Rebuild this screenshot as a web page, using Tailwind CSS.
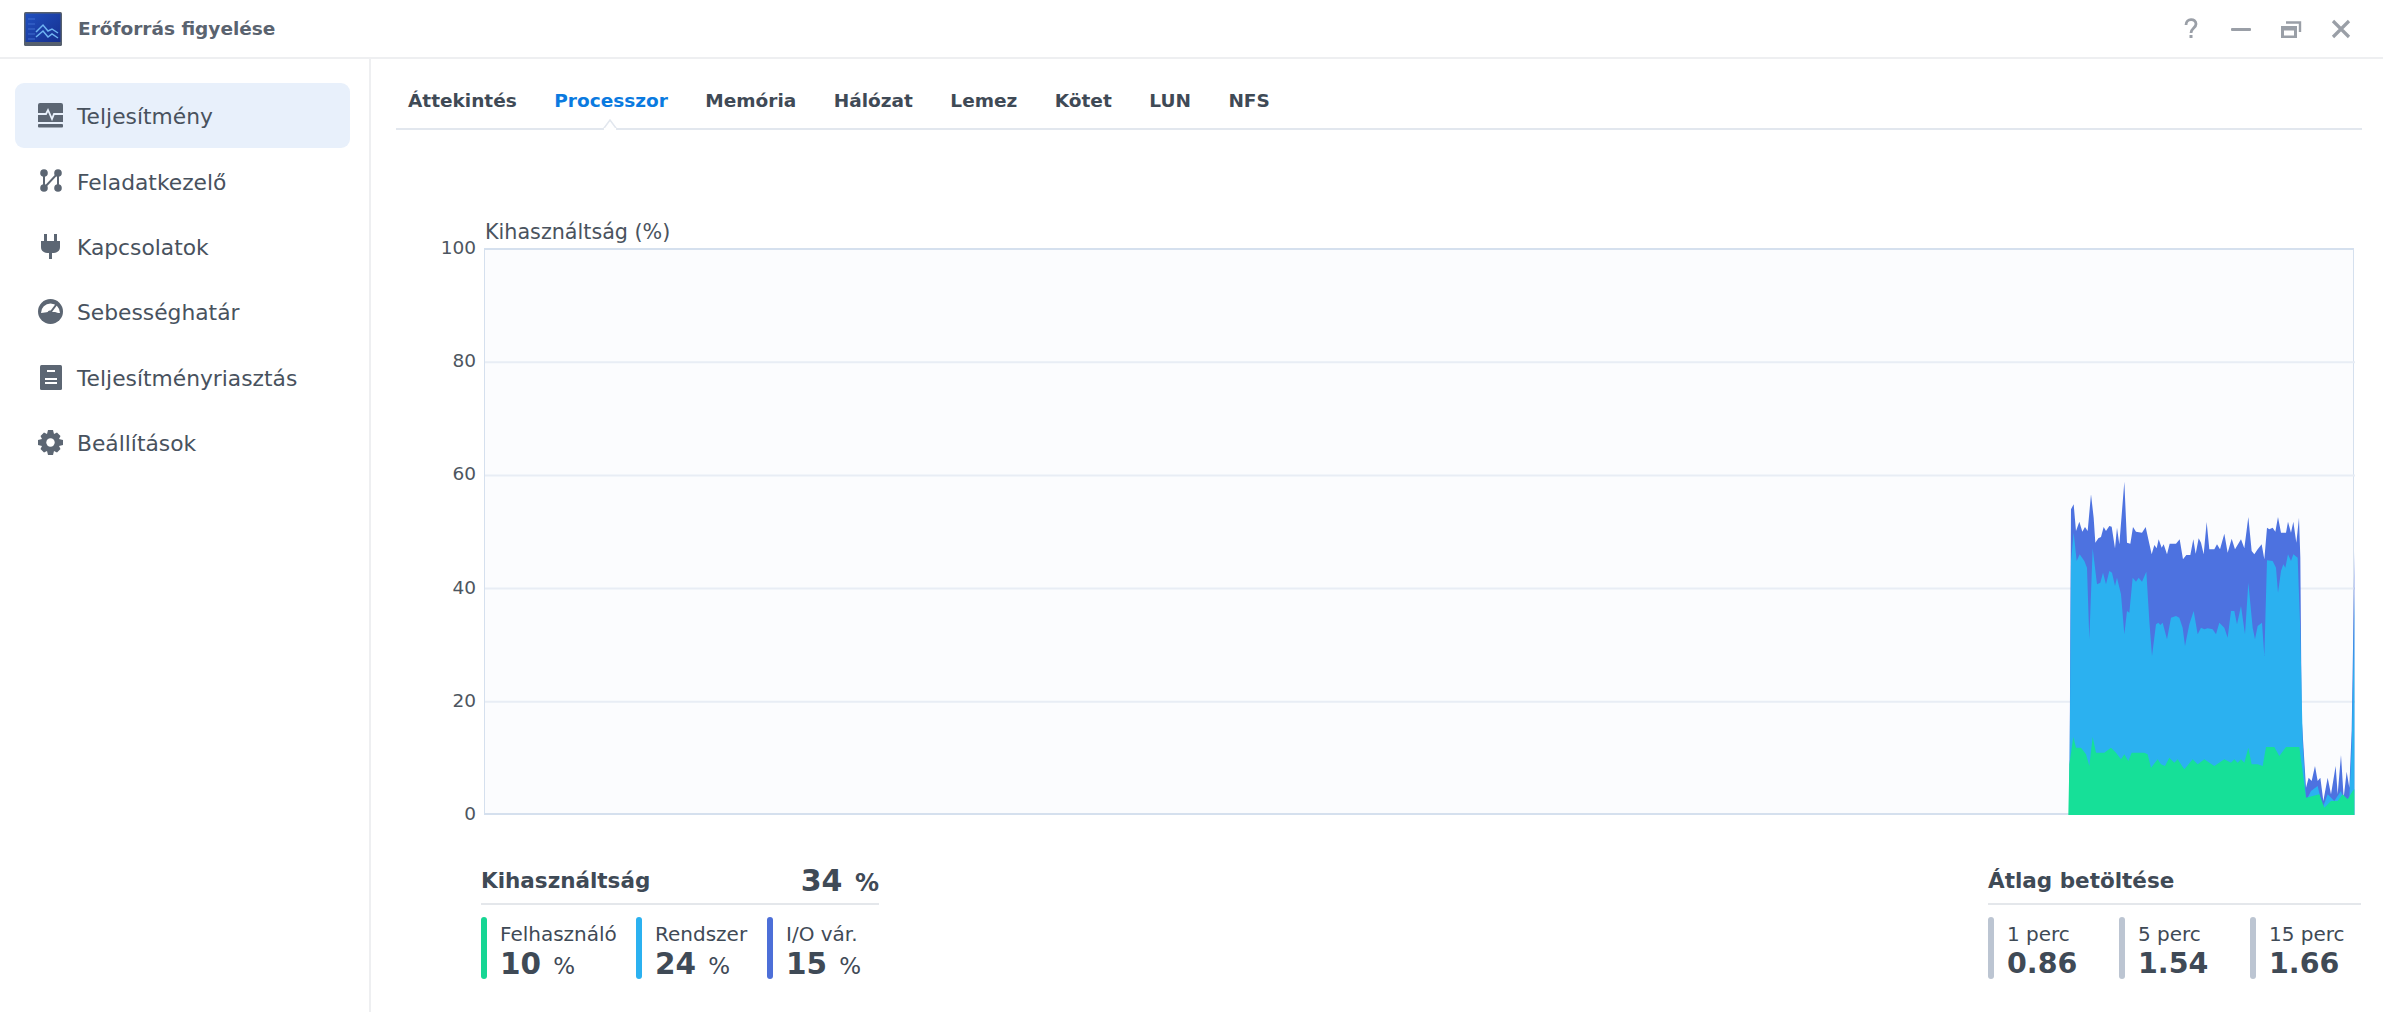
<!DOCTYPE html>
<html lang="hu">
<head>
    <meta charset="UTF-8">
    <title>Erőforrás figyelése</title>
    <script src="https://cdn.jsdelivr.net/npm/@tailwindcss/browser@4"></script>
</head>
<body class="bg-white font-['DejaVu_Sans',sans-serif] text-[#3f4a56] w-[2383px] h-[1012px] overflow-hidden">

    <!-- title bar -->
    <header class="h-[59px] border-b-2 border-[#eeeff1] flex items-center pl-[24px] pr-[30px]">
        <svg width="38" height="34" viewBox="0 0 38 34" class="shrink-0">
            <defs><linearGradient id="screen" x1="0" y1="0" x2="1" y2="1"><stop offset="0" stop-color="#2050c0"/><stop offset="1" stop-color="#162f8e"/></linearGradient></defs>
            <rect width="38" height="34" rx="1.5" fill="#56606e"/>
            <rect x="1.5" y="1.5" width="35" height="28.500" fill="url(#screen)"/>
            <path d="M4 7h7M4 12h7M4 17h7M4 22h7M4 27h7" stroke="#4a79d8" stroke-width="0.800"/>
            <path d="M12 20l7-7 5 6 4-2 6 4" fill="none" stroke="#6fb4f2" stroke-width="1.500"/>
            <path d="M12 25l7-6 5 6 4-3 6 4" fill="none" stroke="#6fb4f2" stroke-width="1.500"/>
        </svg>
        <span class="ml-[16px] text-[18.500px] font-bold text-[#5a636f]">Erőforrás figyelése</span>
        <div class="ml-auto flex items-center gap-[26px] text-[#9a9fa7]">
            <svg width="24" height="24" viewBox="0 0 24 24"><path d="M7 8c0-7 10-7 10-1 0 4-5 4-5 9" fill="none" stroke="currentColor" stroke-width="2.800"/><rect x="10.500" y="18" width="3" height="3" fill="currentColor"/></svg>
            <svg width="24" height="24" viewBox="0 0 24 24"><rect x="2" y="11" width="20" height="3" rx="1" fill="currentColor"/></svg>
            <svg width="24" height="24" viewBox="0 0 24 24"><path d="M7 5.500h14v9.500" fill="none" stroke="currentColor" stroke-width="2.400"/><path d="M2 9h16v12H2z" fill="currentColor"/><rect x="5" y="13.500" width="10" height="5" fill="#fff"/></svg>
            <svg width="24" height="24" viewBox="0 0 24 24"><path d="M4 4l16 16M20 4L4 20" stroke="currentColor" stroke-width="3.200"/></svg>
        </div>
    </header>

    <div class="flex h-[953px]">
        <!-- sidebar -->
        <aside class="w-[371px] shrink-0 border-r-2 border-[#eeeff1] pt-[24px] pl-[15px] pr-[19px] text-[21.800px] text-[#48525e]">
            <div class="h-[65px] mb-[0.400px] rounded-[9px] bg-[#e8f0fb] flex items-center pl-[23px] gap-[14px]">
                <svg width="25" height="25" viewBox="0 0 25 25" class="shrink-0"><path d="M2 0h21a2 2 0 0 1 2 2v17H0V2a2 2 0 0 1 2-2z" fill="#5c6673"/><path d="M0 11h8l2-4 4 9 2-5h9" fill="none" stroke="#e8f0fb" stroke-width="1.800"/><rect y="21" width="25" height="3.500" rx="1" fill="#5c6673"/></svg>
                <span class="pt-[4px]">Teljesítmény</span>
            </div>
            <div class="h-[65px] mb-[0.400px] flex items-center pl-[23px] gap-[14px]">
                <svg width="25" height="25" viewBox="0 0 25 25" class="shrink-0"><g fill="#5c6673"><circle cx="6" cy="5" r="3.800"/><circle cx="20" cy="5" r="3.800"/><circle cx="6" cy="20" r="3.800"/><circle cx="20" cy="20" r="3.800"/></g><path d="M6 5v15L20 5v15" fill="none" stroke="#5c6673" stroke-width="2"/></svg>
                <span class="pt-[4px]">Feladatkezelő</span>
            </div>
            <div class="h-[65px] mb-[0.400px] flex items-center pl-[23px] gap-[14px]">
                <svg width="25" height="25" viewBox="0 0 25 25" class="shrink-0"><path d="M6 0h3v7h7V0h3v7h3v6c0 4-3 6-8 6v6h-3v-6c-5 0-8-2-8-6V7h3z" fill="#5c6673"/></svg>
                <span class="pt-[4px]">Kapcsolatok</span>
            </div>
            <div class="h-[65px] mb-[0.400px] flex items-center pl-[23px] gap-[14px]">
                <svg width="25" height="25" viewBox="0 0 25 25" class="shrink-0"><circle cx="12.500" cy="12.500" r="12.500" fill="#5c6673"/><path d="M3 14a9.500 9.500 0 0 1 19 0c-2 0-4-.500-5-1h-7c-2 0-4 1-7 1z" fill="#fff"/><path d="M12 14l6-8" stroke="#5c6673" stroke-width="2"/><circle cx="12" cy="14" r="2.500" fill="#5c6673"/></svg>
                <span class="pt-[4px]">Sebességhatár</span>
            </div>
            <div class="h-[65px] mb-[0.400px] flex items-center pl-[23px] gap-[14px]">
                <svg width="25" height="25" viewBox="0 0 25 25" class="shrink-0"><rect x="2" width="22" height="25" rx="1.500" fill="#5c6673"/><path d="M9 6h8M7 14h12M7 18h12" stroke="#fff" stroke-width="1.800"/></svg>
                <span class="pt-[4px]">Teljesítményriasztás</span>
            </div>
            <div class="h-[65px] flex items-center pl-[23px] gap-[14px]">
                <svg width="25" height="25" viewBox="0 0 25 25" class="shrink-0"><path d="M10 0h5l1 4 3-1.500 3.500 3.500-1.500 3 4 1v5l-4 1 1.500 3-3.500 3.500-3-1.500-1 4h-5l-1-4-3 1.500L2.500 19l1.500-3-4-1v-5l4-1-1.500-3L6 2.500 9 4z" fill="#5c6673"/><circle cx="12.500" cy="12.500" r="4.200" fill="#fff"/></svg>
                <span class="pt-[4px]">Beállítások</span>
            </div>
        </aside>

        <!-- main -->
        <main class="flex-1 flex flex-col">
            <!-- tabs -->
            <nav class="relative ml-[25px] mr-[21px] h-[71px] border-b-2 border-[#e2e7ee] flex items-center pl-[12px] pt-[15px] gap-[37.500px] text-[18.500px] font-bold text-[#3f4a56]">
                <span>Áttekintés</span>
                <span class="text-[#0a7ae0]">Processzor</span>
                <span>Memória</span>
                <span>Hálózat</span>
                <span>Lemez</span>
                <span>Kötet</span>
                <span>LUN</span>
                <span>NFS</span>
                <svg width="22" height="11" viewBox="0 0 22 11" class="absolute left-[203px] bottom-[-2px]"><path d="M1 10.500h3L11 1l7 9.500h3" fill="#fff" stroke="#e2e7ee" stroke-width="1.500"/><rect x="5" y="9" width="12" height="2" fill="#fff"/></svg>
            </nav>

            <!-- chart -->
            <div class="pl-[113px] pt-[86px]">
                <div class="text-[20.700px] leading-[24px] text-[#4a535e] mt-[4px] mb-[4px] ml-[1px]">Kihasználtság (%)</div>
                <div class="flex ml-[-60px]">
                    <div class="w-[52px] mr-[8px] h-[590px] -my-[12px] flex flex-col justify-between text-right text-[18.500px] leading-[24px] text-[#4d5660]">
                        <span>100</span><span>80</span><span>60</span><span>40</span><span>20</span><span>0</span>
                    </div>
                    <div class="w-[1870px] h-[567px] bg-[#fbfcfe] border border-[#d5e0ee] border-t-2 border-b-2">
                        <svg width="1870" height="567" viewBox="484 248 1870 567" class="block -mt-[1px]">
                            <path d="M484 361.200H2354M484 474.400H2354M484 587.600H2354M484 700.800H2354" stroke="#e8edf5" stroke-width="2"/>
                            <g transform="translate(2040 460) scale(0.33333)">
                                <polygon fill="#4d72e0" points="85,1062 90,145 98,130 105,210 115,182 124,212 132,198 140,210 150,100 158,170 163,245 172,232 180,228 188,198 195,210 205,195 212,197 222,262 228,200 235,250 250,62 258,245 268,248 276,198 285,212 303,215 314,198 322,235 332,280 340,252 347,262 353,235 362,260 368,250 378,280 386,248 405,248 416,235 426,295 436,282 448,282 457,235 464,278 473,232 480,245 488,280 497,183 505,265 520,265 528,250 537,265 550,218 560,275 572,233 582,265 600,235 610,262 622,168 632,270 640,280 650,265 662,250 670,295 678,200 685,205 695,200 703,212 711,168 720,215 735,215 741,182 750,215 757,182 766,245 774,170 778,290 782,770 795,980 803,950 812,960 822,915 830,960 838,950 847,1020 860,950 870,1000 884,915 890,1000 900,882 908,1010 917,932 925,980 932,810 937,500 940,270 940,1062"/>
                                <polygon fill="#2bb1f0" points="85,1062 90,300 98,215 107,300 116,280 130,300 138,320 145,535 155,262 168,370 178,365 186,335 195,370 205,330 213,335 222,375 228,350 240,400 250,520 258,450 265,455 275,350 285,362 293,350 303,362 316,332 325,480 333,585 345,490 352,485 358,492 365,485 378,535 390,470 405,465 415,470 425,500 432,555 445,490 458,450 470,520 480,500 490,505 500,502 515,505 525,520 535,485 550,500 560,530 570,450 580,450 588,490 600,435 612,520 622,365 635,500 642,535 650,495 663,485 670,585 678,298 695,300 705,320 711,395 720,330 727,310 733,320 741,280 750,300 757,280 770,290 778,510 785,840 795,1020 810,990 830,975 845,1040 860,1000 880,1020 900,990 908,1020 925,1010 932,860 937,600 940,400 940,1062"/>
                                <polygon fill="#16e098" points="82,1062 85,910 97,828 105,860 120,860 135,880 145,915 155,828 165,875 190,875 210,860 225,875 240,895 250,880 262,900 272,875 310,875 320,880 330,920 350,895 360,910 372,915 385,890 400,905 410,895 430,925 455,895 470,910 490,895 520,915 550,895 570,905 580,895 590,905 600,895 610,905 622,860 632,910 650,910 665,915 675,858 700,858 715,885 735,858 775,858 782,910 795,1010 815,1005 835,1000 850,1040 870,1020 890,1020 905,1000 920,1015 935,990 940,985 940,1062"/>
                            </g>
                        </svg>
                    </div>
                </div>
            </div>

            <!-- stats -->
            <div class="flex justify-between pl-[110px] pr-[22px] mt-[44px]">
                <section class="w-[398px]">
                    <div class="h-[46px] border-b-2 border-[#e4e7eb] flex items-center justify-between font-bold">
                        <span class="text-[21.500px]">Kihasználtság</span>
                        <span class="text-[30px] leading-[36px] pt-[2px]">34 <span class="text-[24px] ml-[2px]">%</span></span>
                    </div>
                    <div class="flex mt-[12px]">
                        <div class="w-[155px] flex gap-[13px]">
                            <div class="w-[6px] h-[62px] rounded-[3px] bg-[#16d694]"></div>
                            <div><div class="text-[20px] leading-[30px] h-[30px] mt-[2px]">Felhasználó</div><div class="text-[29.500px] leading-[30px] font-bold">10 <span class="text-[23px] font-normal ml-[2px]">%</span></div></div>
                        </div>
                        <div class="w-[131px] flex gap-[13px]">
                            <div class="w-[6px] h-[62px] rounded-[3px] bg-[#2bb1f0]"></div>
                            <div><div class="text-[20px] leading-[30px] h-[30px] mt-[2px]">Rendszer</div><div class="text-[29.500px] leading-[30px] font-bold">24 <span class="text-[23px] font-normal ml-[2px]">%</span></div></div>
                        </div>
                        <div class="flex gap-[13px]">
                            <div class="w-[6px] h-[62px] rounded-[3px] bg-[#4d6fd8]"></div>
                            <div><div class="text-[20px] leading-[30px] h-[30px] mt-[2px]">I/O vár.</div><div class="text-[29.500px] leading-[30px] font-bold">15 <span class="text-[23px] font-normal ml-[2px]">%</span></div></div>
                        </div>
                    </div>
                </section>
                <section class="w-[373px]">
                    <div class="h-[46px] border-b-2 border-[#e4e7eb] flex items-center font-bold">
                        <span class="text-[21.500px]">Átlag betöltése</span>
                    </div>
                    <div class="flex mt-[12px]">
                        <div class="w-[131px] flex gap-[13px]">
                            <div class="w-[6px] h-[62px] rounded-[3px] bg-[#bcc5d2]"></div>
                            <div><div class="text-[20px] leading-[30px] h-[30px] mt-[2px]">1 perc</div><div class="text-[28.500px] leading-[30px] font-bold">0.86</div></div>
                        </div>
                        <div class="w-[131px] flex gap-[13px]">
                            <div class="w-[6px] h-[62px] rounded-[3px] bg-[#bcc5d2]"></div>
                            <div><div class="text-[20px] leading-[30px] h-[30px] mt-[2px]">5 perc</div><div class="text-[28.500px] leading-[30px] font-bold">1.54</div></div>
                        </div>
                        <div class="flex gap-[13px]">
                            <div class="w-[6px] h-[62px] rounded-[3px] bg-[#bcc5d2]"></div>
                            <div><div class="text-[20px] leading-[30px] h-[30px] mt-[2px]">15 perc</div><div class="text-[28.500px] leading-[30px] font-bold">1.66</div></div>
                        </div>
                    </div>
                </section>
            </div>
        </main>
    </div>
</body>
</html>
